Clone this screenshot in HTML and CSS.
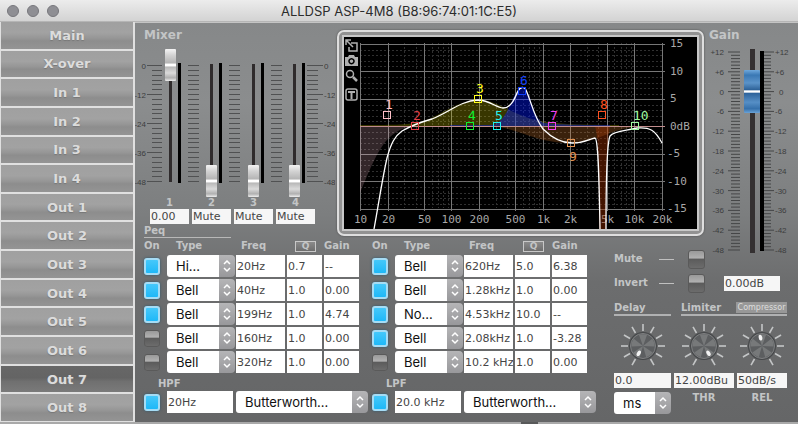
FILE: index.html
```html
<!DOCTYPE html>
<html lang="en">
<head>
    <meta charset="UTF-8">
    <meta name="viewport" content="width=device-width, initial-scale=1.0">
    <title>ALLDSP ASP-4M8</title>
    <link rel="stylesheet" href="styles.css">
</head>
<body>
    <header class="titlebar">
        <div class="lights"><span></span><span></span><span></span></div>
        <h1>ALLDSP ASP-4M8 (B8:96:74:01:1C:E5)</h1>
    </header>

    <div class="window">
        <nav class="channels">
            <button type="button">Main</button>
            <button type="button">X-over</button>
            <button type="button">In 1</button>
            <button type="button">In 2</button>
            <button type="button">In 3</button>
            <button type="button">In 4</button>
            <button type="button">Out 1</button>
            <button type="button">Out 2</button>
            <button type="button">Out 3</button>
            <button type="button">Out 4</button>
            <button type="button">Out 5</button>
            <button type="button">Out 6</button>
            <button type="button" class="active">Out 7</button>
            <button type="button">Out 8</button>
        </nav>

        <main class="panel">
            <section class="mixer">
                <h2>Mixer</h2>
                <div class="faders">
                    <svg class="scale wide" data-side="left" width="28" height="148"></svg>
                    <div class="strips">
                        <div class="strip"><input type="range" class="fader" min="-48" max="0" value="0" aria-label="Mixer 1"><span class="meter"></span></div>
                        <svg class="scale" data-side="none" width="11" height="148"></svg>
                        <div class="strip"><input type="range" class="fader" min="-48" max="0" value="-48" aria-label="Mixer 2"><span class="meter"></span></div>
                        <svg class="scale" data-side="none" width="11" height="148"></svg>
                        <div class="strip"><input type="range" class="fader" min="-48" max="0" value="-48" aria-label="Mixer 3"><span class="meter"></span></div>
                        <svg class="scale" data-side="none" width="11" height="148"></svg>
                        <div class="strip"><input type="range" class="fader" min="-48" max="0" value="-48" aria-label="Mixer 4"><span class="meter"></span></div>
                    </div>
                    <svg class="scale wide" data-side="right" width="28" height="148"></svg>
                </div>
                <div class="levels">
                    <div><label for="mix1">1</label><input type="text" class="field" id="mix1" value="0.00"></div>
                    <div><label for="mix2">2</label><input type="text" class="field" id="mix2" value="Mute"></div>
                    <div><label for="mix3">3</label><input type="text" class="field" id="mix3" value="Mute"></div>
                    <div><label for="mix4">4</label><input type="text" class="field" id="mix4" value="Mute"></div>
                </div>
                <h3 class="peq-title">Peq</h3>
            </section>

            <section class="graph">
                <div class="screen">
                    <svg id="plot" viewBox="344 37 353 192">
                        <g id="grid"></g>
                        <path fill="#ffc4d0" fill-opacity="0.2" d="M360 126V193C367 176 374 158 383 145C391 134 400 128 413 126Z"/>
                        <path fill="#d8d000" fill-opacity="0.26" d="M360 125C390 125 408 125 420 122C440 117 455 101 478 100C497 100 510 113 532 119C550 124 580 125 619 125V126H360Z"/>
                        <path fill="#e08030" fill-opacity="0.26" d="M490 126C520 128 535 143 571 143C600 143 607 128 645 126Z"/>
                        <path fill="#0018ff" fill-opacity="0.42" d="M450 125H490C509 125 512 88 522 88C532 88 532 122 545 123C560 125 590 125 610 125V126H450Z"/>
                        <path fill="#a03000" fill-opacity="0.42" d="M595 126H610C607 138 607 170 606 229H599C599 170 599 140 595 126Z"/>
                        <path stroke="#c08c8c" d="M360 126.500H665"/>
                        <path class="curve" d="M374 229C378 208 382 180 387 158C391 143 395 136 402 131C409 127 421 122 432 119C450 112 460 101 478 100C490 100 496 108 503 108C512 108 515 97 518 91C520 87 524 86 526 90C532 104 534 117 543 129C549 135 558 143 572 143C584 143 589 139 595 138C598 139 599 170 600 229M606 229C606 180 607 143 610 136C614 131 625 131 637 128C650 127 655 130 662 143"/>
                        <g id="bands"></g>
                    </svg>
                    <div class="tools">
                        <button type="button" aria-label="Detach"><svg viewBox="0 0 13 13"><path d="M6 4h6v8H4V8M1 1l7 7M1 6V1h5"/></svg></button>
                        <button type="button" aria-label="Snapshot"><svg viewBox="0 0 13 13"><path class="solid" fill-rule="evenodd" d="M0 3h3l1-2h5l1 2h3v9H0zM6.500 4a3.200 3.200 0 1 0 .01 0zM6.500 5.500a1.700 1.700 0 1 1-.01 0z"/></svg></button>
                        <button type="button" aria-label="Zoom"><svg viewBox="0 0 13 13"><circle cx="5" cy="5" r="3.500"/><path stroke-width="2.500" d="M8 8l4 4"/></svg></button>
                        <button type="button" aria-label="Text"><svg viewBox="0 0 13 13"><rect x="1" y="1" width="11" height="11" rx="2"/><path stroke-width="2" d="M3 4h7M6.500 4v7"/></svg></button>
                    </div>
                </div>
            </section>

            <section class="gain">
                <h2>Gain</h2>
                <div class="gain-row">
                    <svg class="gain-scale" data-side="left" width="32" height="206"></svg>
                    <input type="range" class="gain-fader" min="-48" max="12" value="0" aria-label="Gain">
                    <span class="gain-meter"></span>
                    <svg class="gain-scale" data-side="right" width="26" height="206"></svg>
                </div>
            </section>

            <section class="peq">
                <div class="bands">
                    <table>
                        <thead><tr><th>On</th><th class="type">Type</th><th class="freq">Freq</th><th class="q"><button type="button">Q</button></th><th>Gain</th></tr></thead>
                        <tbody id="bandsLeft"></tbody>
                    </table>
                    <table>
                        <thead><tr><th>On</th><th class="type">Type</th><th class="freq">Freq</th><th class="q"><button type="button">Q</button></th><th>Gain</th></tr></thead>
                        <tbody id="bandsRight"></tbody>
                    </table>
                </div>
                <div class="filters">
                    <div class="filter">
                        <label for="hpf">HPF</label>
                        <div class="filter-row">
                            <input type="checkbox" class="led" aria-label="HPF on" checked>
                            <input type="text" class="field" id="hpf" value="20Hz">
                            <select class="picker" aria-label="HPF type"><option>Butterworth...</option></select>
                        </div>
                    </div>
                    <div class="filter">
                        <label for="lpf">LPF</label>
                        <div class="filter-row">
                            <input type="checkbox" class="led" aria-label="LPF on" checked>
                            <input type="text" class="field" id="lpf" value="20.0 kHz">
                            <select class="picker" aria-label="LPF type"><option>Butterworth...</option></select>
                        </div>
                    </div>
                </div>
            </section>

            <section class="output">
                <div class="switch"><label for="mute">Mute</label><i></i><input type="checkbox" class="led" id="mute"></div>
                <div class="switch"><label for="invert">Invert</label><i></i><input type="checkbox" class="led" id="invert"><input type="text" class="field" value="0.00dB" aria-label="Gain value"></div>
                <div class="dynamics">
                    <div class="delay">
                        <h3>Delay</h3>
                        <div class="knob" data-angle="210"><input type="range" aria-label="Delay knob"></div>
                        <input type="text" class="field" value="0.0" aria-label="Delay">
                        <select class="picker" aria-label="Delay unit"><option>ms</option></select>
                    </div>
                    <div class="limiter">
                        <h3>Limiter <button type="button">Compressor</button></h3>
                        <div class="limiter-row">
                            <div class="thr">
                                <div class="knob" data-angle="148"><input type="range" aria-label="Threshold knob"></div>
                                <input type="text" class="field" id="thr" value="12.00dBu">
                                <label for="thr">THR</label>
                            </div>
                            <div class="rel">
                                <div class="knob" data-angle="-10"><input type="range" aria-label="Release knob"></div>
                                <input type="text" class="field" id="rel" value="50dB/s">
                                <label for="rel">REL</label>
                            </div>
                        </div>
                    </div>
                </div>
            </section>
        </main>
    </div>
    <footer class="edge"><span></span></footer>
    <script src="script.js"></script>
</body>
</html>
```
FILE: styles.css
```css
* {
    margin: 0;
    padding: 0;
    box-sizing: border-box;
}

body {
    display: flex;
    flex-direction: column;
    min-height: 100vh;
    font-family: "DejaVu Sans", Verdana, sans-serif;
    font-size: 10px;
    color: #d0d2d3;
    background: #6b6c6d;
}

button, input, select {
    font: inherit;
    color: inherit;
    border: none;
    border-radius: 0;
    appearance: none;
}

svg {
    display: block;
}

h2 {
    font-size: 12px;
    line-height: 14px;
    color: #c3c5c6;
}

h3, th, label {
    font-size: 10px;
    font-weight: bold;
    line-height: 12px;
    color: #c3c5c6;
}

/* Title bar */
.titlebar {
    position: relative;
    height: 22px;
    background: linear-gradient(#ececec, #d3d3d3);
    border-bottom: 1px solid #b5b5b5;
}

.titlebar h1 {
    font: 13px/22px Inter, "Liberation Sans", sans-serif;
    text-align: center;
    color: #2c2c2c;
}

.lights {
    position: absolute;
    top: 5px;
    left: 7px;
    display: flex;
    gap: 8px;
}

.lights span {
    width: 12px;
    height: 12px;
    border-radius: 50%;
    background: #8f8f94;
    border: 1px solid #77777c;
}

.window {
    flex: 1;
    display: flex;
}

/* Channel list */
.channels {
    width: 135px;
    display: grid;
    grid-auto-rows: 1fr;
    gap: 2px;
    padding: 0 2px 1px 1px;
    background: #e0e0e0;
}

.channels button {
    font-size: 13px;
    font-weight: bold;
    color: #dcdcdc;
    text-shadow: 0 1px 1px #777;
    background: linear-gradient(#a0a0a0, #a2a2a2 40%, #969696 60%, #8d8d8d 70%, #949494);
}

.channels .active {
    background: linear-gradient(#676767, #646464 45%, #707070 60%, #7a7a7a);
}

.panel {
    flex: 1;
    display: grid;
    grid-template-columns: 200px minmax(0, 1fr) 92px 92px;
    grid-template-rows: auto 9px 1fr;
    border-top: 1px solid #c4c4c4;
    background: linear-gradient(#868889, #8b8d8e 20%, #7c7e7f 48%, #6c6d6e 65%, #656667);
}

/* Mixer */
.mixer {
    grid-area: 1 / 1;
    padding-top: 5px;
}

.mixer h2 {
    padding-left: 9px;
}

.faders {
    display: flex;
    gap: 2px;
    margin-top: 7px;
}

.strips {
    flex: 1;
    display: flex;
    justify-content: space-between;
}

.strip {
    display: flex;
    align-items: center;
    gap: 2px;
}

.scale {
    stroke: #505152;
}

.scale text, .gain-scale text {
    font: 8px "Liberation Sans", Arial, sans-serif;
    fill: #3c3d3e;
    stroke: none;
}

.fader {
    writing-mode: vertical-lr;
    direction: rtl;
    width: 11px;
    height: 148px;
    background: linear-gradient(#2f2b2c, #2f2b2c) center / 3px 118px no-repeat;
}

.fader::-webkit-slider-thumb {
    appearance: none;
    width: 11px;
    height: 32px;
    border-radius: 1px;
    background: linear-gradient(#f4f4f4, #d2d2d2 20%, #b4b4b4 44%, #fff 47%, #fff 53%, #b8b8b8 56%, #dadada 75%, #b0b0b0 90%, #eee);
}

.meter {
    width: 3px;
    height: 120px;
    background: #000;
}

.levels {
    display: flex;
    gap: 3px;
    padding-left: 15px;
}

.levels div {
    width: 39px;
    text-align: center;
}

.levels label {
    display: block;
    line-height: 12px;
}

.field {
    display: block;
    width: 100%;
    height: 15px;
    padding-left: 1px;
    font-size: 11px;
    color: #454545;
    background: #f6f6f6;
}

.peq-title {
    width: 87px;
    margin-left: 9px;
    line-height: 13px;
    border-bottom: 1px solid #b8b8b8;
}

/* Response graph */
.graph {
    grid-area: 1 / 2 / 2 / 4;
    padding: 7px 2px 0;
}

.screen {
    position: relative;
    padding: 5px;
    border: 2px solid #dedede;
    border-radius: 7px;
    background: #929292;
    box-shadow: 0 0 2px #444;
}

#plot {
    width: 100%;
    height: auto;
    background: #000;
    outline: 2px solid #c8c8c8;
    fill: none;
}

#grid .minor {
    stroke: #303030;
    stroke-dasharray: 2 2;
}

#grid .major {
    stroke: #777;
}

#grid text {
    font: 11px "DejaVu Sans Mono", monospace;
    fill: #a8a8a8;
}

#bands text {
    font: 13px "DejaVu Sans Mono", monospace;
}

.curve {
    stroke: #fff;
    stroke-width: 1.3;
}

.tools {
    position: absolute;
    top: 7px;
    left: 6px;
    display: flex;
    flex-direction: column;
    gap: 2px;
}

.tools button {
    width: 13px;
    height: 13px;
    background: none;
}

.tools button:last-child {
    margin-top: 4px;
}

.tools svg {
    fill: none;
    stroke: #b0b0b0;
    stroke-width: 1.5;
}

.tools .solid {
    fill: #b0b0b0;
    stroke: none;
}

/* Output gain */
.gain {
    grid-area: 1 / 4 / 3 / 5;
    padding: 5px 0 0 3px;
}

/* the scale may reach past its cell, next to the Mute switch */
.gain-row {
    display: flex;
    align-items: center;
    height: 206px;
    margin: 6px 0 -8px;
}

.gain-scale {
    stroke: #454647;
}

.gain-fader {
    writing-mode: vertical-lr;
    direction: rtl;
    width: 16px;
    height: 241px;
    margin-left: 3px;
    background: linear-gradient(#343031, #343031) center / 5px 204px no-repeat;
}

.gain-fader::-webkit-slider-thumb {
    appearance: none;
    width: 16px;
    height: 43px;
    border-radius: 1px;
    background: linear-gradient(#6fa8dc, #3a78b4 12%, #5b93c9 30%, #2b5f95 47%, #fff 48%, #fff 52%, #2c6199 53%, #568fc6 75%, #3570ab 90%, #6aa3d8);
}

.gain-meter {
    width: 4px;
    height: 200px;
    background: #000;
}

/* Equaliser bands */
.peq {
    grid-area: 2 / 1 / 4 / 3;
    padding-left: 9px;
}

.bands, .filters {
    display: flex;
    gap: 13px;
}

table {
    border-collapse: collapse;
    table-layout: fixed;
    width: 215px;
}

th {
    height: 16px;
    text-align: left;
    vertical-align: middle;
}

th:first-child {
    width: 23px;
}

.type {
    width: 69px;
    padding-left: 9px;
}

.freq {
    width: 51px;
    padding-left: 5px;
}

.q {
    width: 37px;
}

.q button {
    display: block;
    width: 21px;
    height: 11px;
    margin-left: 8px;
    font-size: 9px;
    line-height: 9px;
    border: 1px solid #c8c8c8;
    background: linear-gradient(#8b8b8b, #6d6d6d);
}

td {
    height: 24px;
    padding-right: 2px;
    vertical-align: middle;
}

td:last-child {
    padding-right: 0;
}

td:nth-child(2) {
    padding-right: 1px;
}

.peq .field {
    height: 22px;
    background: #fff;
}

.led {
    display: block;
    flex: none;
    width: 16px;
    height: 17px;
    border: 1px solid #5a5a5a;
    border-radius: 3px;
    background: linear-gradient(#999, #b0b0b0 40%, #5c5c5c 50%, #6c6c6c);
}

.led:checked {
    border: 2px solid #a5dcf5;
    background: linear-gradient(#45c8fa, #1eb8f8);
    box-shadow: 0 0 3px #2f5a70;
}

.picker {
    display: block;
    width: 100%;
    height: 22px;
    padding: 0 18px 0 9px;
    font: 13px Inter, "Liberation Sans", sans-serif;
    color: #111;
    border-radius: 3px 4px 4px 3px;
    background:
        url("data:image/svg+xml,%3Csvg xmlns='http://www.w3.org/2000/svg' width='16' height='22' fill='none' stroke='white' stroke-width='1.500'%3E%3Cpath d='M5 9l3-3 3 3M5 13l3 3 3-3'/%3E%3C/svg%3E") right center / 16px 22px no-repeat,
        linear-gradient(#b5b5b7, #98989b) right / 16px 100% no-repeat,
        #fff;
}

.filters {
    margin-top: 3px;
}

.filter {
    width: 215px;
}

.filter label {
    display: block;
    padding-left: 14px;
    line-height: 14px;
}

.filter-row {
    display: flex;
    align-items: center;
}

.filter-row .field {
    flex: none;
    width: 66px;
    margin: 0 3px 0 7px;
}

.filter-row .picker {
    flex: none;
    width: 132px;
}

/* Output section */
.output {
    grid-area: 3 / 3 / 4 / 5;
}

.switch {
    display: flex;
    align-items: center;
    height: 24px;
}

.switch label {
    width: 45px;
}

.switch i {
    width: 15px;
    height: 1px;
    margin-right: 14px;
    background: #c0c0c0;
}

.switch .led {
    width: 17px;
    height: 19px;
}

.switch .field {
    width: 56px;
    margin-left: 19px;
}

.dynamics {
    display: flex;
    gap: 3px;
    margin-top: 6px;
}

.dynamics h3 {
    display: flex;
    justify-content: space-between;
    align-items: center;
    height: 15px;
    border-bottom: 2px solid #b0b1b2;
}

.delay {
    width: 57px;
}

.limiter h3 {
    margin-left: 7px;
}

.limiter h3 button {
    width: 51px;
    height: 11px;
    font: 8px/11px "DejaVu Sans", Verdana, sans-serif;
    color: #ddd;
    background: #989898;
}

.limiter-row {
    display: flex;
    gap: 3px;
    text-align: center;
}

.thr {
    width: 60px;
}

.rel {
    width: 50px;
}

.knob {
    position: relative;
    display: flex;
    justify-content: center;
    padding: 7px 0 5px;
}

.knob input {
    position: absolute;
    inset: 0;
    width: 100%;
    opacity: 0;
}

.limiter-row label {
    display: block;
    margin-top: 4px;
}

.delay .picker {
    margin-top: 4px;
}

.edge {
    display: flex;
    justify-content: center;
    height: 2px;
    padding-left: 260px;
    background: #a9a9a9;
}

.edge span {
    width: 17px;
    background: #58595a;
}
```
FILE: script.js
```js
const NS = 'http://www.w3.org/2000/svg';

function add(parent, name, attrs, text) {
    const el = document.createElementNS(NS, name);
    for (const key in attrs) {
        el.setAttribute(key, attrs[key]);
    }
    if (text !== undefined) {
        el.textContent = text;
    }
    parent.appendChild(el);
    return el;
}

// Mixer scales: 0 to -48 in steps of 2 dB
document.querySelectorAll('.scale').forEach(svg => {
    const side = svg.dataset.side;
    for (let i = 0; i <= 24; i++) {
        const y = Math.round(16 + i * 116 / 24) + 0.5;
        const major = i % 6 === 0;
        let x1 = 0, x2 = 11;
        if (side === 'left') {
            x1 = major ? 12 : 17;
            x2 = 27;
        } else if (side === 'right' && major) {
            x2 = 16;
        }
        add(svg, 'path', { d: `M${x1} ${y}H${x2}` });
        if (major && side !== 'none') {
            add(svg, 'text', side === 'left'
                ? { x: 11, y: y + 3, 'text-anchor': 'end' }
                : { x: 17, y: y + 3 }, String(-2 * i));
        }
    }
});

// Gain scales: +12 to -48 in steps of 1 dB
document.querySelectorAll('.gain-scale').forEach(svg => {
    const left = svg.dataset.side === 'left';
    for (let db = 12; db >= -48; db--) {
        const y = 4 + (12 - db) * 3.3;
        const major = db % 6 === 0;
        const d = left ? `M${major ? 19 : 22} ${y}H31` : `M0 ${y}H${major ? 10 : 7}`;
        add(svg, 'path', { d: d });
        if (major) {
            add(svg, 'text', left
                ? { x: 15, y: y + 3, 'text-anchor': 'end' }
                : { x: db === 0 ? 15 : 11, y: y + 3 }, db > 0 ? '+' + db : db);
        }
    }
});

// Graph grid
const grid = document.getElementById('grid');
const fx = f => 360.5 + Math.log10(f / 10) * 91.4;
const gy = db => 126.5 - db * 5.5;
const labels = { 10: '10', 20: '20', 50: '50', 100: '100', 200: '200', 500: '500', 1000: '1k', 2000: '2k', 5000: '5k', 10000: '10k', 20000: '20k' };

for (let db = -15; db <= 15; db++) {
    if (db % 5) {
        add(grid, 'path', { class: 'minor', d: `M360 ${Math.round(gy(db)) + 0.5}H662` });
    }
}
for (let decade = 10; decade <= 10000; decade *= 10) {
    for (let n = 1; n < 10 && n * decade <= 20000; n++) {
        if (!labels[n * decade]) {
            add(grid, 'path', { class: 'minor', d: `M${Math.round(fx(n * decade)) + 0.5} 43V208` });
        }
    }
}
for (const f in labels) {
    const x = Math.floor(fx(f)) + 0.5;
    add(grid, 'path', { class: 'major', d: `M${x} 43V211` });
    add(grid, 'text', { x: x, y: 223, 'text-anchor': 'middle' }, labels[f]);
}
for (let db = -15; db <= 15; db += 5) {
    add(grid, 'path', { class: 'major', d: `M360 ${Math.floor(gy(db)) + 0.5}H665` });
    add(grid, 'text', { x: db < 0 ? 667 : 670, y: gy(db) + 3 }, db === 0 ? '0dB' : db);
}

// Band handles
const handles = [
    [387, 115, '#ffc0c8'], [415, 126, '#e04048'], [478, 99, '#ffff20'], [470, 126, '#10f030'],
    [497, 126, '#20f0f0'], [522, 91, '#1040ff'], [552, 126, '#f040f0'], [602, 115, '#ff5020'],
    [571, 143, '#e09050'], [635, 126, '#a0f8a0']
];
const bands = document.getElementById('bands');
handles.forEach(([x, y, color], i) => {
    add(bands, 'rect', { x: x - 3.5, y: y - 3.5, width: 7, height: 7, stroke: color });
    add(bands, 'text', { x: x - 2, y: i === 8 ? y + 18 : y - 6, fill: color }, i + 1);
});

// Equaliser rows: on, type, frequency, Q, gain
const rows = [
    [1, 'Hi...', '20Hz', '0.7', '--'],
    [1, 'Bell', '40Hz', '1.0', '0.00'],
    [1, 'Bell', '199Hz', '1.0', '4.74'],
    [0, 'Bell', '160Hz', '1.0', '0.00'],
    [0, 'Bell', '320Hz', '1.0', '0.00'],
    [1, 'Bell', '620Hz', '5.0', '6.38'],
    [1, 'Bell', '1.28kHz', '1.0', '0.00'],
    [1, 'No...', '4.53kHz', '10.0', '--'],
    [1, 'Bell', '2.08kHz', '1.0', '-3.28'],
    [0, 'Bell', '10.2 kHz', '1.0', '0.00']
];
rows.forEach(([on, type, freq, q, gain], i) => {
    const n = i + 1;
    const body = document.getElementById(i < 5 ? 'bandsLeft' : 'bandsRight');
    body.insertAdjacentHTML('beforeend', `<tr>
        <td><input type="checkbox" class="led" aria-label="Band ${n} on" ${on ? 'checked' : ''}></td>
        <td><select class="picker" aria-label="Band ${n} type"><option>${type}</option></select></td>
        <td><input type="text" class="field" aria-label="Band ${n} frequency" value="${freq}"></td>
        <td><input type="text" class="field" aria-label="Band ${n} Q" value="${q}"></td>
        <td><input type="text" class="field" aria-label="Band ${n} gain" value="${gain}"></td>
    </tr>`);
});

// Knobs
document.querySelectorAll('.knob').forEach(knob => {
    const svg = add(knob, 'svg', { width: 46, height: 45, viewBox: '-23 -23 46 45' });
    for (let a = -150; a <= 150; a += 30) {
        add(svg, 'path', { d: 'M0 -15V-22', stroke: '#c4c6c7', 'stroke-width': 1.6, transform: `rotate(${a})` });
    }
    add(svg, 'circle', { r: 14, fill: '#46484a' });
    add(svg, 'circle', { r: 12.5, fill: '#5c5e60', stroke: '#8a8c8d', 'stroke-width': 0.8 });
    for (let a = 0; a < 360; a += 72) {
        add(svg, 'path', { d: 'M0 0L-4 -11A12 12 0 0 1 4 -11Z', fill: '#77797a', transform: `rotate(${a})` });
    }
    add(svg, 'ellipse', { cy: -8.5, rx: 1.8, ry: 3, fill: '#f2f2f2', transform: `rotate(${knob.dataset.angle})` });
});
```
